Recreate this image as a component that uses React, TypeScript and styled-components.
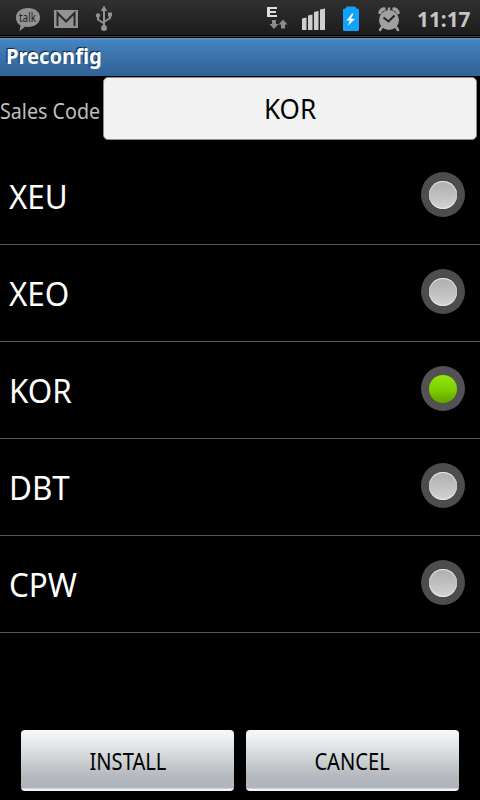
import React, { useState } from "react";
import styled, { createGlobalStyle } from "styled-components";

const GlobalStyle = createGlobalStyle`
  * { box-sizing: border-box; }
  body { margin: 0; background: #000; font-family: "Noto Sans", "Open Sans", sans-serif; }
`;

const Screen = styled.div`
  width: 480px;
  height: 800px;
  display: flex;
  flex-direction: column;
  background: #000;
  overflow: hidden;
`;

const StatusBar = styled.header`
  height: 38px;
  flex: none;
  display: flex;
  justify-content: space-between;
  background: linear-gradient(#303030, #1c1c1c 35px, #000 35px, #000 36px, #4d4038 36px, #4d4038 37px, #000 37px);
`;

const StatusIcons = styled.div`
  display: flex;
  height: 38px;
  svg { display: block; }
`;

const Clock = styled.time`
  width: 64px;
  padding-left: 1px;
  font-size: 21px;
  font-weight: 700;
  line-height: 39px;
  color: #c5c5c5;
  white-space: nowrap;
`;

const TitleBar = styled.h1`
  margin: 0;
  height: 38px;
  flex: none;
  padding-left: 6px;
  background: linear-gradient(#5a9bd6, #4684be 2px, #3a72a9 50%, #2f6297);
  color: #fff;
  font-size: 22px;
  font-weight: 700;
  line-height: 35px;
  text-shadow: -1px -1px 1px #10253c;
`;

const Stretch = styled.span<{ $x: number; $origin?: string }>`
  display: inline-block;
  white-space: nowrap;
  transform: scaleX(${(p) => p.$x});
  transform-origin: ${(p) => p.$origin ?? "left"} center;
`;

const CodeRow = styled.div`
  height: 72px;
  flex: none;
  display: flex;
  align-items: flex-start;
  padding: 1px 3px 0 0;
`;

const CodeLabel = styled.label`
  width: 103px;
  color: #bebebe;
  font-size: 22px;
  line-height: 67px;
`;

const CodeField = styled.button`
  flex: 1;
  height: 63px;
  padding: 0 0 2px 1px;
  border: 1px solid #8c8c8c;
  border-radius: 5px;
  background: #f2f2f2;
  color: #000;
  font: 400 28px/58px "Noto Sans", sans-serif;
`;

const List = styled.ul`
  list-style: none;
  margin: 0;
  padding: 0;
  flex: 1;
`;

const Option = styled.li`
  height: 97px;
  display: flex;
  align-items: flex-start;
  justify-content: space-between;
  padding: 0 15px 0 9px;
  border-bottom: 1px solid #575757;
  color: #fff;
  font-size: 33px;
  line-height: 97px;
`;

const Radio = styled.span<{ $on: boolean }>`
  width: 44px;
  height: 45px;
  margin-top: 24px;
  border-radius: 50%;
  display: flex;
  align-items: center;
  justify-content: center;
  background: ${(p) => (p.$on ? "#535056" : "#4d4d4d")};
  &::after {
    content: "";
    width: 28px;
    height: 28px;
    border-radius: 50%;
    background: ${(p) => (p.$on ? "linear-gradient(#94e60a, #7fd000 50%, #61a300)" : "linear-gradient(#adadad, #d2d2d2)")};
    box-shadow: ${(p) => (p.$on ? "0 0 2px #416b0a" : "inset 0 1px 1px #eee, inset 0 -1px 1px #eee, 0 0 1px #333")};
  }
`;

const Actions = styled.footer`
  height: 70px;
  flex: none;
  display: flex;
  gap: 12px;
  padding: 0 21px;
`;

const ActionButton = styled.button`
  width: 213px;
  height: 61px;
  padding: 0;
  border: 0;
  border-radius: 4px;
  background: linear-gradient(#f8f9fa, #e3e6e8 25%, #c8cccf 55%, #b1b5bc 80%, #b1b5bd 95%, #f1f3f4 97%);
  color: #000;
  font: 400 23px/63px "Noto Sans", sans-serif;
`;

const NotificationIcons = () => (
  <svg width="130" height="38" viewBox="0 0 130 38">
    <path fill="#929292" d="M28 8c7 0 12 4 12 9.500s-5 9.500-12 9.500l-3-.2-5.500 4.200 1-5.500c-3-1.700-4.500-4.500-4.500-8 0-5.500 5-9.500 12-9.500Z" />
    <text x="27.500" y="22" textAnchor="middle" textLength="17" lengthAdjust="spacingAndGlyphs" fill="#222" fontFamily="Noto Sans, sans-serif" fontSize="12">talk</text>
    <path fill="#929292" d="M54 10h24v18H54z" />
    <path fill="none" stroke="#292929" strokeWidth="2" d="M57.500 26V13L66 21.500 74.500 13v13" />
    <g fill="#929292" stroke="#929292">
      <path fill="none" strokeWidth="2" d="M104 9v19M98 15v4.500l6 4M110 14v4l-6 4" />
      <path stroke="none" d="m104 5.500 3.200 5.500h-6.400ZM108 12.500h4v4h-4z" />
      <circle cx="98" cy="15.500" r="2.200" stroke="none" />
      <circle cx="104" cy="28" r="3" stroke="none" />
    </g>
  </svg>
);

const SystemIcons = () => (
  <svg width="152" height="38" viewBox="264 0 152 38">
    <path fill="#dedede" d="M267 7h10v2h-7v2h6v2h-6v2h7v2h-10Z" />
    <path fill="#8c8c8c" d="M272 20h4v4h2.500L274 29 269.500 24h2.500ZM281 28.500v-4h-2.500l4.500-5 4.500 5h-2.500v4Z" />
    <path fill="#cfcfcf" d="M302 18.500l4.500-1V30H302ZM308 15.500l4.500-1V30H308ZM314 12l4.500-1v19H314ZM320 9.500l5-1V30h-5Z" />
    <path fill="#13a2fb" d="M347 6.500h8q1 0 1 2h1.500q1.500 0 1.500 1.500v19.500q0 1.500-1.500 1.500h-13q-1.500 0-1.500-1.500V10q0-1.500 1.500-1.500h1.500q0-2 1-2Z" />
    <path fill="#effaff" d="m352 13.500-5.500 7 3.500.2-2.500 5.300 7.500-7-4-.5 2.500-5Z" />
    <g stroke="#a0a0a0" fill="none" strokeLinecap="round">
      <path strokeWidth="3.500" d="M380 12.500q1-3 4-3.500M398 12.500q-1-3-4-3.500" />
      <path strokeWidth="2.500" d="m382 27-2 3M396 27l2 3" />
      <circle cx="389" cy="20" r="10" fill="#a0a0a0" stroke="none" />
      <path strokeWidth="2.500" strokeLinecap="butt" d="M389 7.500V12" />
      <path stroke="#222" strokeWidth="2" strokeLinecap="butt" d="m383.500 17.500 5 4 6-6" />
    </g>
  </svg>
);

const codes = ["XEU", "XEO", "KOR", "DBT", "CPW"];

export default function App() {
  const [code, setCode] = useState("KOR");
  return (
    <>
      <GlobalStyle />
      <Screen>
        <StatusBar>
          <StatusIcons><NotificationIcons /></StatusIcons>
          <StatusIcons>
            <SystemIcons />
            <Clock dateTime="11:17"><Stretch $x={0.99}>11:17</Stretch></Clock>
          </StatusIcons>
        </StatusBar>
        <TitleBar><Stretch $x={0.915}>Preconfig</Stretch></TitleBar>
        <CodeRow>
          <CodeLabel><Stretch $x={0.895}>Sales Code</Stretch></CodeLabel>
          <CodeField><Stretch $x={0.93} $origin="center">{code}</Stretch></CodeField>
        </CodeRow>
        <List>
          {codes.map((c) => (
            <Option key={c} onClick={() => setCode(c)}>
              <Stretch $x={0.95}>{c}</Stretch>
              <Radio $on={c === code} />
            </Option>
          ))}
        </List>
        <Actions>
          <ActionButton><Stretch $x={0.875} $origin="center">INSTALL</Stretch></ActionButton>
          <ActionButton><Stretch $x={0.875} $origin="center">CANCEL</Stretch></ActionButton>
        </Actions>
      </Screen>
    </>
  );
}
